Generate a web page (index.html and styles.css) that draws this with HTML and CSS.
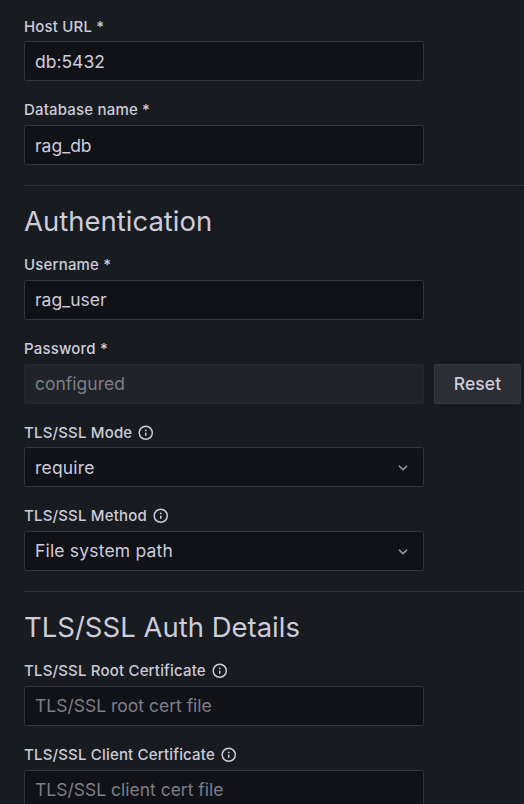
FILE: index.html
```html
<!DOCTYPE html>
<html lang="en">
<head>
<meta charset="utf-8">
<title>Data source settings</title>
<link rel="stylesheet" href="styles.css">
</head>
<body>
<svg class="defs" aria-hidden="true">
  <symbol id="info" viewBox="0 0 24 24"><path d="M12,2A10,10,0,1,0,22,12,10.01114,10.01114,0,0,0,12,2Zm0,18a8,8,0,1,1,8-8A8.00917,8.00917,0,0,1,12,20Zm0-8.5a1,1,0,0,0-1,1v3a1,1,0,0,0,2,0v-3A1,1,0,0,0,12,11.5Zm0-4a1.25,1.25,0,1,0,1.25,1.25A1.25,1.25,0,0,0,12,7.5Z"/></symbol>
  <symbol id="angle" viewBox="0 0 24 24"><path d="M17,9.17a1,1,0,0,0-1.41,0L12,12.71,8.46,9.17a1,1,0,0,0-1.41,0,1,1,0,0,0,0,1.42l4.24,4.24a1,1,0,0,0,1.42,0L17,10.59A1,1,0,0,0,17,9.17Z"/></symbol>
</svg>
<main class="form">
  <section class="section">
    <div class="field"><div class="label">Host URL *</div><div class="input">db:5432</div></div>
    <div class="field"><div class="label">Database name *</div><div class="input">rag_db</div></div>
  </section>
  <section class="section ruled">
    <h3 class="title">Authentication</h3>
    <div class="field"><div class="label">Username *</div><div class="input">rag_user</div></div>
    <div class="field"><div class="label">Password *</div>
      <div class="row"><div class="input disabled">configured</div><button class="reset">Reset</button></div>
    </div>
    <div class="field"><div class="label">TLS/SSL Mode<svg class="info"><use href="#info"/></svg></div>
      <div class="input select"><span>require</span><svg class="angle"><use href="#angle"/></svg></div>
    </div>
    <div class="field"><div class="label">TLS/SSL Method<svg class="info"><use href="#info"/></svg></div>
      <div class="input select"><span>File system path</span><svg class="angle"><use href="#angle"/></svg></div>
    </div>
  </section>
  <section class="section ruled">
    <h3 class="title">TLS/SSL Auth Details</h3>
    <div class="field"><div class="label">TLS/SSL Root Certificate<svg class="info"><use href="#info"/></svg></div><div class="input placeholder">TLS/SSL root cert file</div></div>
    <div class="field"><div class="label">TLS/SSL Client Certificate<svg class="info"><use href="#info"/></svg></div><div class="input placeholder">TLS/SSL client cert file</div></div>
  </section>
</main>
</body>
</html>
```
FILE: styles.css
```css
* { box-sizing: border-box; }
html, body { height: 100%; }
body {
  margin: 0;
  overflow: hidden;
  background: #181b1f;
  color: #ccccdc;
  font-family: Inter, "Liberation Sans", sans-serif;
  font-size: 17.5px;
}
.defs { display: none; }
.form { padding: 16.6875px 0 0 24px; }
.section { padding-bottom: 0.875px; }
.ruled { border-top: 1px solid #2d2f35; }
.title {
  margin: 0;
  height: 69.125px;
  padding-top: 18px;
  font-size: 27.5px;
  font-weight: 400;
  line-height: 34px;
}
.field { padding-bottom: 19.125px; }
.label {
  display: flex;
  align-items: center;
  height: 18.75px;
  margin-bottom: 5.875px;
  font-size: 15px;
  font-weight: 500;
  letter-spacing: 0.18px;
}
.input {
  width: 400px;
  height: 40px;
  padding: 0.5625px 10px 0;
  border: 1px solid #35363c;
  border-radius: 2.5px;
  background: #111217;
  line-height: 38px;
  white-space: nowrap;
}
.placeholder { color: #7d7e88; }
.disabled { background: #202327; border-color: #26282c; color: #7d7e88; }
.row { display: flex; gap: 10px; }
.reset {
  width: 87px;
  height: 40px;
  padding: 0.6px 0 0;
  border: 1px solid #38393e;
  border-radius: 2.5px;
  background: #2d2e33;
  color: #ccccdc;
  font: 500 17.5px/37px Inter, "Liberation Sans", sans-serif;
  letter-spacing: 0.1px;
}
.select {
  display: flex;
  align-items: center;
  justify-content: space-between;
  padding-top: 0.625px;
  letter-spacing: 0.01071em;
}
.info { width: 17.5px; height: 17.5px; margin: 0.5px 0 0 4.8px; fill: #ccccdc; }
.angle { width: 20px; height: 20px; margin-top: 0.6px; fill: #9495a1; }
```
